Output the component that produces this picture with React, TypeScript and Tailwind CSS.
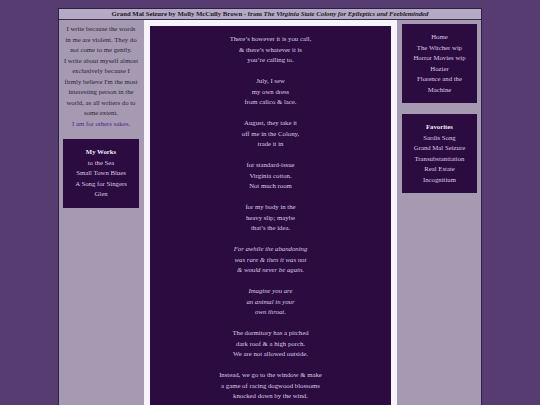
import React from "react";

const stanzas: { lines: string[]; italic?: boolean }[] = [
  { lines: ["There’s however it is you call,", "& there’s whatever it is", "you’re calling to."] },
  { lines: ["July, I sew", "my own dress", "from calico & lace."] },
  { lines: ["August, they take it", "off me in the Colony,", "trade it in"] },
  { lines: ["for standard-issue", "Virginia cotton.", "Not much room"] },
  { lines: ["for my body in the", "heavy slip; maybe", "that’s the idea."] },
  { lines: ["For awhile the abandoning", "was rare & then it was not", "& would never be again."], italic: true },
  { lines: ["Imagine you are", "an animal in your", "own throat."], italic: true },
  { lines: ["The dormitory has a pitched", "dark roof & a high porch.", "We are not allowed outside."] },
  { lines: ["Instead, we go to the window & make", "a game of racing dogwood blossoms", "knocked down by the wind."] },
];

const intro = [
  "I write because the words",
  "in me are violent. They do",
  "not come to me gently.",
  "I write about myself almost",
  "exclusively because I",
  "firmly believe I'm the most",
  "interesting person in the",
  "world, as all writers do to",
  "some extent.",
];

function Box({ title, items, className }: { title?: string; items: string[]; className?: string }) {
  return (
    <div className={"bg-[#2b0b40] text-[#dcc9e6] text-center py-[8px] " + (className ?? "")}>
      {title && <div className="font-bold text-[#f1e8f6]">{title}</div>}
      {items.map((t, i) => (
        <div key={i}>{t}</div>
      ))}
    </div>
  );
}

export default function App() {
  return (
    <div
      className="min-h-[405px] bg-[#563c70] pt-[8px] text-[6.75px] leading-[10.5px]"
      style={{ fontFamily: '"Liberation Serif", "Times New Roman", serif' }}
    >
      <div className="mx-auto w-[424px] border border-[#2e2040] bg-[#a699b2]">
        <div className="bg-[#b5aac5] border-b border-[#3a2c4c] text-center font-bold text-[#1c1626] h-[11px]">
          Grand Mal Seizure by Molly McCully Brown - from{" "}
          <i>The Virginia State Colony for Epileptics and Feebleminded</i>
        </div>
        <div className="flex items-stretch">
          <div className="w-[85px] shrink-0 pt-[4px] pl-[4px] pr-[5px] text-center text-[#2a2535]">
            {intro.map((t, i) => (
              <div key={i}>{t}</div>
            ))}
            <div className="text-[#48288a]">I am for others sakes.</div>
            <Box
              className="mt-[10px] pb-[8px]"
              title="My Works"
              items={["to the Sea", "Small Town Blues", "A Song for Singers", "Glen"]}
            />
          </div>
          <div className="w-[253px] shrink-0 bg-[#f8f4fb] p-[6px]">
            <div className="bg-[#2b0b40] text-[#dcc9e6] text-center pt-[8px] pb-[9px]">
              {stanzas.map((s, i) => (
                <div key={i} className={(s.italic ? "italic " : "") + (i > 0 ? "mt-[10.5px]" : "")}>
                  {s.lines.map((l, j) => (
                    <div key={j}>{l}</div>
                  ))}
                </div>
              ))}
            </div>
          </div>
          <div className="w-[84px] shrink-0 pt-[4px] pl-[5px] pr-[4px]">
            <Box items={["Home", "The Witcher wip", "Horror Movies wip", "Hozier", "Florence and the", "Machine"]} />
            <Box
              className="mt-[11px]"
              title="Favorites"
              items={["Sardis Song", "Grand Mal Seizure", "Transubstantiation", "Real Estate", "Incognitium"]}
            />
          </div>
        </div>
      </div>
    </div>
  );
}
